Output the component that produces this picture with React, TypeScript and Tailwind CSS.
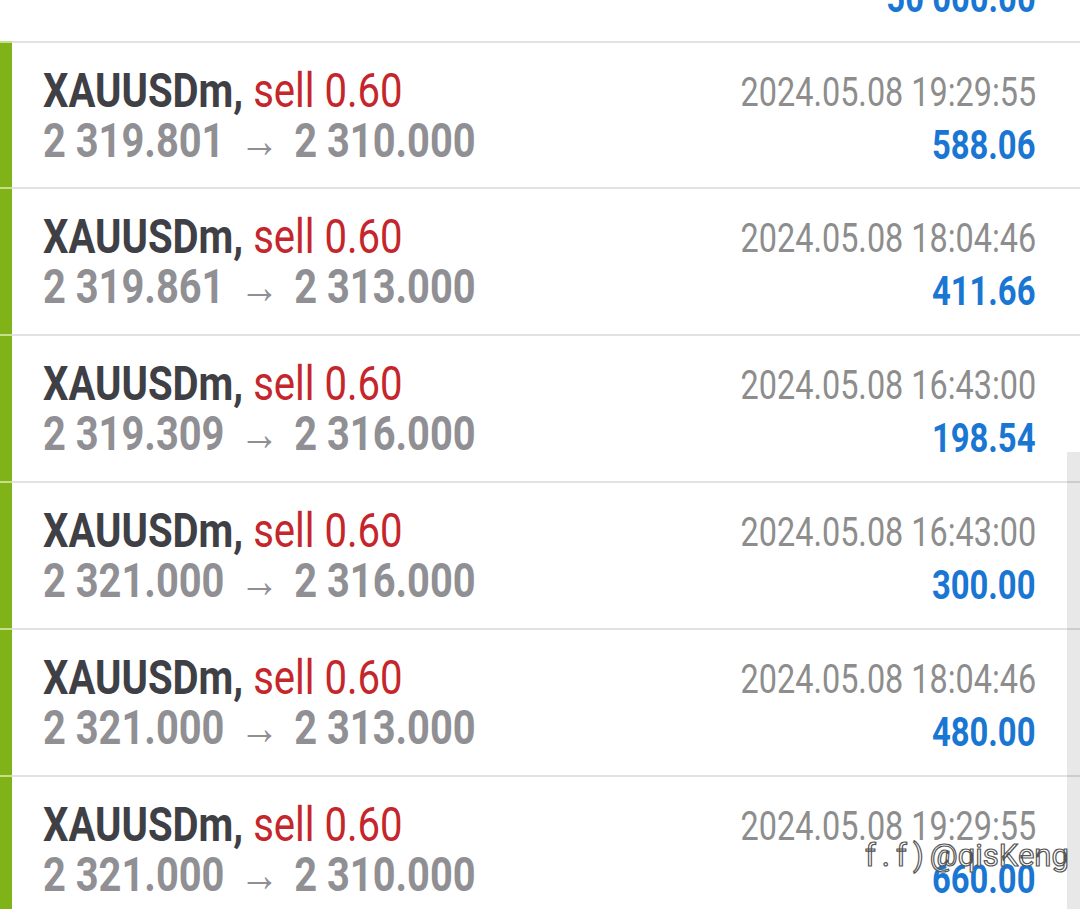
import React from "react";

type Deal = {
  open: string;
  close: string;
  time: string;
  profit: string;
};

const DEALS: Deal[] = [
  { open: "2 319.801", close: "2 310.000", time: "2024.05.08 19:29:55", profit: "588.06" },
  { open: "2 319.861", close: "2 313.000", time: "2024.05.08 18:04:46", profit: "411.66" },
  { open: "2 319.309", close: "2 316.000", time: "2024.05.08 16:43:00", profit: "198.54" },
  { open: "2 321.000", close: "2 316.000", time: "2024.05.08 16:43:00", profit: "300.00" },
  { open: "2 321.000", close: "2 313.000", time: "2024.05.08 18:04:46", profit: "480.00" },
  { open: "2 321.000", close: "2 310.000", time: "2024.05.08 19:29:55", profit: "660.00" },
];

function Separator() {
  return (
    <div className="flex h-[2px]">
      <div className="w-[12px] bg-[#c6df8c]" />
      <div className="flex-1 bg-[#e2e2e2]" />
    </div>
  );
}

function DealRow({ deal }: { deal: Deal }) {
  return (
    <div>
      <Separator />
      <div className="flex h-[144.9px]">
        <div className="w-[12px] bg-[#7fb317]" />
        <div className="flex flex-1 justify-between pl-[31px] pr-[44px] pt-[23px]">
          <div className="flex flex-col">
            <span className="inline-block origin-left scale-x-[0.835] whitespace-nowrap text-[48px] leading-[50px]">
              <span className="font-bold text-[#3f3f46]">XAUUSDm,</span>{" "}
              <span className="text-[#c4262b]">sell 0.60</span>
            </span>
            <span className="inline-block origin-left scale-x-[0.83] whitespace-nowrap text-[48px] font-bold leading-[50px] text-[#909094]">
              {deal.open}
              <span className="mx-[18px] font-normal">→</span>
              {deal.close}
            </span>
          </div>
          <div className="flex flex-col items-end">
            <span className="inline-block origin-right scale-x-[0.79] whitespace-nowrap text-[41px] leading-[53px] text-[#8d8d8d]">
              {deal.time}
            </span>
            <span className="inline-block origin-right scale-x-[0.8] whitespace-nowrap text-[41px] font-bold leading-[53px] text-[#1976d2]">
              {deal.profit}
            </span>
          </div>
        </div>
      </div>
    </div>
  );
}

export default function App() {
  return (
    <div className="relative h-[909px] w-[1080px] overflow-hidden bg-white font-['Roboto',sans-serif]">
      <div className="-mt-[104.4px]">
        {/* balance row, cut off at the top */}
        <div className="flex h-[144.9px] justify-end pr-[44px] pt-[23px]">
          <div className="flex flex-col items-end">
            <span className="text-[41px] leading-[53px]">&nbsp;</span>
            <span className="inline-block origin-right scale-x-[0.8] whitespace-nowrap text-[41px] font-bold leading-[53px] text-[#1976d2]">
              50 000.00
            </span>
          </div>
        </div>
        {DEALS.map((d, i) => (
          <DealRow key={i} deal={d} />
        ))}
      </div>

      {/* scrollbar */}
      <div className="absolute bottom-0 right-0 top-[452px] w-[13px] bg-black/[0.09]" />

      {/* watermark */}
      <div className="absolute left-[865px] top-[836px] whitespace-nowrap text-[31px] leading-[40px] text-white [-webkit-text-stroke:1.2px_#555]">
        <span className="tracking-[6px]">f.f)</span>@qisKeng
      </div>
    </div>
  );
}
